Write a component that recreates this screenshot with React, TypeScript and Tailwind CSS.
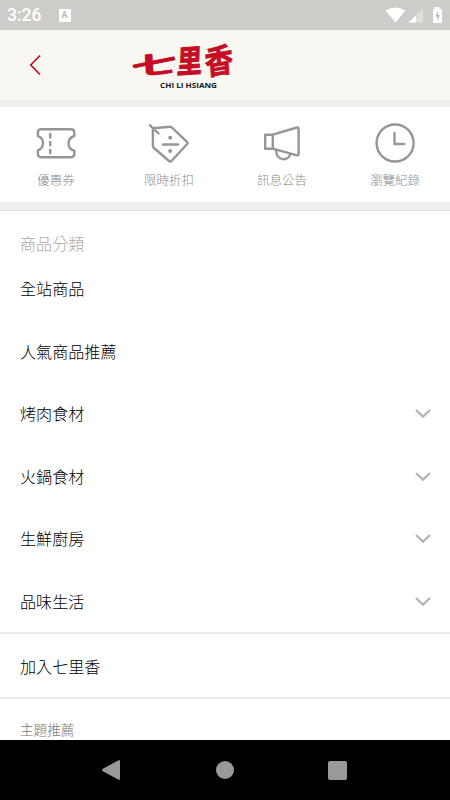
import React from 'react';

interface MenuItem {
  label: string;
  expandable?: boolean;
}

const menuItems: MenuItem[] = [
  { label: '全站商品' },
  { label: '人氣商品推薦' },
  { label: '烤肉食材', expandable: true },
  { label: '火鍋食材', expandable: true },
  { label: '生鮮廚房', expandable: true },
  { label: '品味生活', expandable: true },
];

const iconProps = {
  width: 42,
  height: 42,
  viewBox: '0 0 42 42',
  fill: 'none',
  stroke: '#969696',
  strokeWidth: 2.4,
  strokeLinecap: 'round' as const,
  strokeLinejoin: 'round' as const,
};

const CouponIcon = () => (
  <svg {...iconProps}>
    <path d="M6 7.2H36Q39.3 7.2 39.3 10.5V14C31.5 16.5 31.5 26.500 39.3 28.700V32Q39.3 35.200 36 35.200H6Q2.900 35.200 2.900 32V28.300C9.700 26 9.700 16.500 2.900 14.200V10.5Q2.900 7.2 6 7.2Z" />
    <path strokeLinecap="butt" d="M15.200 11V16.500M15.200 19V24.300M15.200 27V32.300" />
  </svg>
);

const TagIcon = () => (
  <svg {...iconProps}>
    <path d="M4.900 6.200L22 4.800Q23 4.700 24 5.700L39 19.800Q40.200 21 39 22.300L23.500 39Q22.300 40.400 21 39L5.400 25.500Q4.900 25 4.900 24.300ZM2 3.300L10.500 11.500" />
    <path d="M15 22.500H30" />
    <circle cx="22.200" cy="15.800" r="2" fill="#969696" stroke="none" />
    <circle cx="22.200" cy="29" r="2" fill="#969696" stroke="none" />
  </svg>
);

const NewsIcon = () => (
  <svg {...iconProps}>
    <path d="M4.200 12.700H11.800V26.700H4.200ZM11.800 12.700L36 5.500Q37.600 5.100 37.600 6.700V32Q37.600 33.700 36 33.300L11.800 26.700" />
    <path d="M15 28.500C15.600 39.500 27.800 39.500 29.300 31.800" />
  </svg>
);

const HistoryIcon = () => (
  <svg {...iconProps}>
    <circle cx="21.100" cy="21" r="18.500" />
    <path d="M20.500 11V22H30" />
  </svg>
);

const shortcuts = [
  { label: '優惠券', icon: <CouponIcon /> },
  { label: '限時折扣', icon: <TagIcon /> },
  { label: '訊息公告', icon: <NewsIcon /> },
  { label: '瀏覽紀錄', icon: <HistoryIcon /> },
];

const StatusBar = () => (
  <div className="flex h-[30px] shrink-0 items-center bg-[#cdccc8] text-white">
    <span className="ml-[7px] mt-[2px] w-[36px] font-['Roboto',sans-serif] text-[17.5px] leading-none font-medium">3:26</span>
    <span className="ml-[15.5px] flex h-[13px] w-[12px] items-center justify-center rounded-[1px] bg-white font-['Roboto',sans-serif] text-[9px] leading-none font-bold text-[#bdbcb8]">A</span>
    <svg className="ml-auto mr-[7px]" width="58" height="18" viewBox="0 0 58 18">
      <path d="M.5 4.500Q10.500 -1.500 20.500 4.500L10.500 16.500Z" fill="#fff" />
      <path d="M38 2.500V16.500H23.500Z" fill="#dfdedb" />
      <path d="M31 9.500V16.500H23.500Z" fill="#fff" />
      <path d="M49.500 1H54.500V3H56Q57 3 57 4V16Q57 17 56 17H49Q48 17 48 16V4Q48 3 49 3H49.500Z" fill="#fff" />
      <path d="M53 5L50.500 10.500H52.500V15L55 9H53Z" fill="#bdbcb8" />
    </svg>
  </div>
);

const Logo = () => (
  <svg className="ml-[78px]" width="130" height="70" viewBox="119 30 130 70">
    <g fill="#c70d23" stroke="#c70d23" strokeLinejoin="round" className="font-['Noto_Sans_CJK_TC',sans-serif] font-bold">
      <text transform="translate(131 76.500) rotate(-7) skewX(-4) scale(2.300 1.200)" fontSize="20" strokeWidth="0.7">七</text>
      <text transform="translate(175.500 73.500) rotate(-4) skewX(-6) scale(1.150 1.420)" fontSize="22" strokeWidth="0.7">里</text>
      <text transform="translate(204.500 75.500) rotate(-10) skewX(-6) scale(1.260 1.430)" fontSize="23" strokeWidth="0.5">香</text>
    </g>
    <text x="159" y="87.500" textLength="57" lengthAdjust="spacingAndGlyphs" fontSize="7.500" fill="#171717" className="font-['Open_Sans',sans-serif] font-bold">CHI LI HSIANG</text>
  </svg>
);

const App: React.FC = () => {
  return (
    <div className="flex h-[800px] w-[450px] flex-col overflow-hidden bg-white font-['Noto_Sans_CJK_TC',sans-serif]">
      <StatusBar />

      <header className="flex h-[70px] shrink-0 items-center bg-[#f8f7f2]">
        <button className="ml-[29px]">
          <svg width="13" height="22" viewBox="0 0 13 22" fill="none" stroke="#c4001b" strokeWidth="1.5">
            <path d="M11 1.500L1.700 11L11 20.500" />
          </svg>
        </button>
        <Logo />
      </header>

      <nav className="flex h-[110px] shrink-0 overflow-hidden border-t-[7px] border-b-[8px] border-[#eee]">
        {shortcuts.map(s => (
          <button key={s.label} className="flex w-[113px] shrink-0 flex-col items-center pt-[15px] pr-[1px] text-[#8c8c8c]">
            {s.icon}
            <span className="mt-[7px] text-[12.5px] leading-[18px] font-light">{s.label}</span>
          </button>
        ))}
      </nav>

      <main className="min-h-0 flex-1 overflow-hidden border-t border-[#ddd] bg-white">
        <h2 className="pt-[20px] pl-[20px] text-[16.1px] leading-[24px] font-light text-[#aaa]">商品分類</h2>
        <ul className="h-[379px] border-b-2 border-[#ebebeb] pt-[10px]">
          {menuItems.map(item => (
            <li key={item.label} className="flex h-[62.5px] items-start justify-between pt-[10px] pr-[18px] pl-[20px] text-[16.1px] leading-[24px] text-black">
              <span className="pt-[1px] font-light">{item.label}</span>
              {item.expandable && (
                <svg className="mt-[7px]" width="18" height="14" viewBox="0 0 18 14" fill="none" stroke="#b5b5b5" strokeWidth="2.4">
                  <path d="M2 3L9 9.700L16 3" />
                </svg>
              )}
            </li>
          ))}
        </ul>
        <div className="flex h-[65px] items-center border-b-2 border-[#ebebeb] pt-[1px] pl-[20px] text-[16.1px] font-light text-black">加入七里香</div>
        <h2 className="pt-[20px] pl-[20px] text-[13.6px] leading-[20px] font-light text-[#777]">主題推薦</h2>
      </main>

      <footer className="flex h-[60px] shrink-0 items-center bg-black pl-[102px]">
        <svg width="18" height="20" viewBox="0 0 18 20" fill="#999">
          <path d="M17 0Q18 0 18 1V19Q18 20 17 20L.5 11Q-.5 10 .5 9Z" />
        </svg>
        <div className="ml-[96px] h-[18px] w-[18px] rounded-full bg-[#999]" />
        <div className="ml-[94px] h-[19px] w-[19px] rounded-[2px] bg-[#999]" />
      </footer>
    </div>
  );
};

export default App;
